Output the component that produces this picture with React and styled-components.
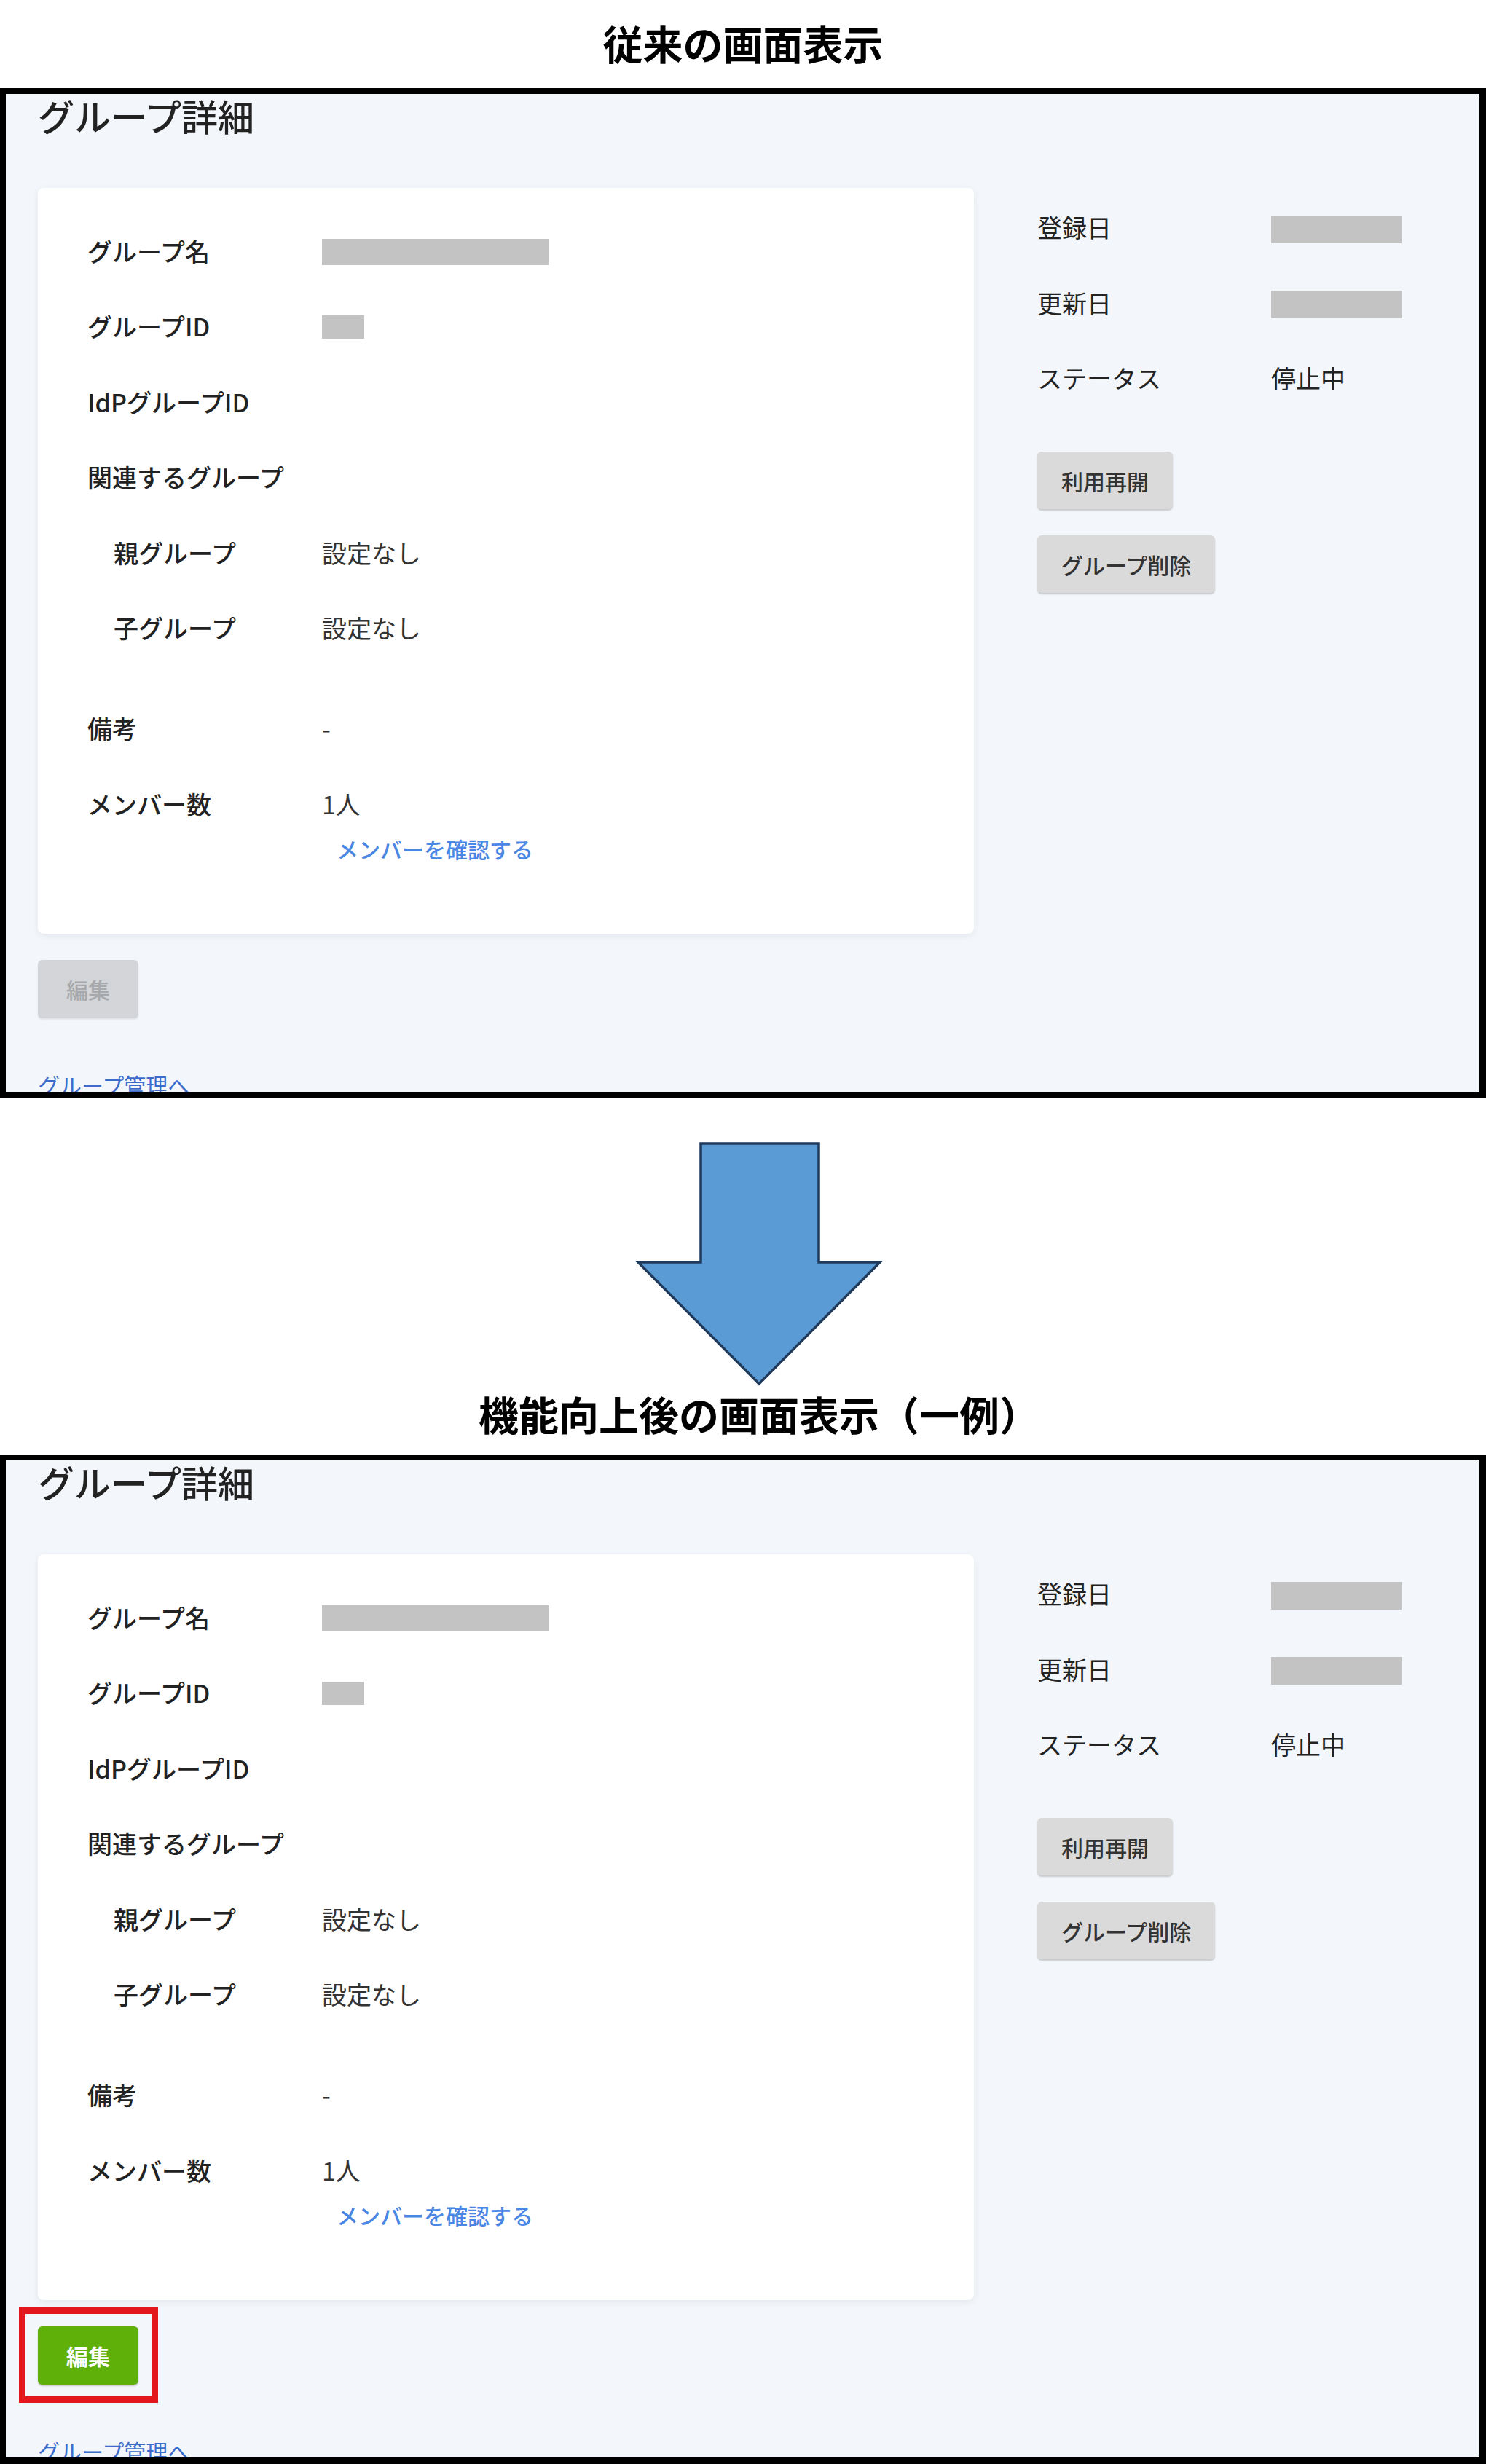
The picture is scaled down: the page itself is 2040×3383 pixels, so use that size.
import React from "react";
import styled, { createGlobalStyle } from "styled-components";

const GlobalStyle = createGlobalStyle`
  html, body {
    margin: 0;
    padding: 0;
    background: #ffffff;
  }
  body {
    font-family: "Noto Sans CJK JP", "Noto Sans", sans-serif;
    color: #222;
  }
`;

const Page = styled.div`
  width: 2040px;
`;

const Caption = styled.h2`
  margin: 0;
  height: ${(p) => p.$h}px;
  line-height: ${(p) => p.$lh}px;
  font-size: 55px;
  font-weight: 700;
  color: #000;
  text-align: center;
  padding-left: ${(p) => p.$shift || 0}px;
  box-sizing: border-box;
`;

const Frame = styled.section`
  box-sizing: border-box;
  height: ${(p) => p.$h}px;
  border: 9px solid #000;
  border-top-width: 8px;
  border-left-width: 8px;
  background: #f3f6fa;
  overflow: hidden;
  padding-left: 44px;
`;

const Heading = styled.h1`
  margin: 0 0 71px;
  font-size: 50px;
  line-height: 58px;
  font-weight: 500;
  color: #222;
`;

const Body = styled.div`
  display: flex;
  gap: 87px;
  align-items: flex-start;
`;

const Card = styled.div`
  box-sizing: border-box;
  width: 1285px;
  background: #fff;
  border-radius: 8px;
  box-shadow: 0 3px 10px rgba(40, 60, 90, 0.07);
  padding: 35px 0 65.5px 68px;
`;

const Row = styled.div`
  display: grid;
  grid-template-columns: 322px 1fr;
  padding: 27.75px 0;
  line-height: 48px;
  font-size: 34px;
  margin-top: ${(p) => p.$gap || 0}px;
`;

const Label = styled.div`
  font-weight: 500;
  color: #222;
  padding-left: ${(p) => (p.$sub ? 36 : 0)}px;
`;

const Value = styled.div`
  color: #333;
  display: flex;
  flex-direction: column;
  align-items: flex-start;
`;

const Masked = styled.span`
  display: block;
  width: ${(p) => p.$w}px;
  height: ${(p) => p.$h}px;
  background: #c3c3c3;
  margin-top: ${(p) => (48 - p.$h) / 2 + 1}px;
`;

const MemberLink = styled.a`
  margin-top: 13px;
  margin-left: 20px;
  font-size: 30px;
  font-weight: 500;
  color: #4a86e3;
  text-decoration: none;
`;

const Side = styled.div`
  margin-top: 2px;
  display: flex;
  flex-direction: column;
  align-items: flex-start;
`;

const SideRow = styled.div`
  display: grid;
  grid-template-columns: 321px 1fr;
  height: 103.5px;
  align-items: center;
  font-size: 34px;
  color: #222;
  width: 520px;
`;

const SideButtons = styled.div`
  margin-top: 49.5px;
  display: flex;
  flex-direction: column;
  align-items: flex-start;
  gap: 36px;
`;

const GrayButton = styled.button`
  height: 79px;
  padding: 0 33px;
  border: none;
  border-radius: 6px;
  background: #dadada;
  box-shadow: 0 2px 2px rgba(0, 0, 0, 0.18);
  font-family: inherit;
  font-size: 30px;
  font-weight: 500;
  color: #333;
`;

const EditWrap = styled.div`
  position: relative;
  display: inline-block;
  margin-top: 36px;
`;

const EditButton = styled.button`
  display: block;
  width: 138px;
  height: 80px;
  border: none;
  border-radius: 6px;
  font-family: inherit;
  font-size: 30px;
  font-weight: ${(p) => (p.$active ? 700 : 500)};
  background: ${(p) => (p.$active ? "#60b00a" : "#d3d5d8")};
  color: ${(p) => (p.$active ? "#fff" : "#a7a9ac")};
  box-shadow: 0 2px 2px rgba(0, 0, 0, ${(p) => (p.$active ? 0.2 : 0.08)});
`;

const Highlight = styled.span`
  position: absolute;
  top: -26px;
  left: -26px;
  right: -27px;
  bottom: -25px;
  border: 9px solid #e3161e;
  pointer-events: none;
`;

const BackLink = styled.a`
  display: block;
  margin-top: 71px;
  font-size: 30px;
  line-height: 40px;
  color: #3b6ccb;
  text-decoration: none;
`;

const ArrowSection = styled.div`
  padding: 60px 0 21px;
`;

const ArrowSvg = styled.svg`
  display: block;
  margin-left: 872px;
`;

function GroupDetail({ h, active }) {
  return (
    <Frame $h={h}>
      <Heading>グループ詳細</Heading>
      <Body>
        <Card>
          <Row>
            <Label>グループ名</Label>
            <Value>
              <Masked $w={312} $h={36} />
            </Value>
          </Row>
          <Row>
            <Label>グループID</Label>
            <Value>
              <Masked $w={58} $h={32} />
            </Value>
          </Row>
          <Row>
            <Label>IdPグループID</Label>
            <Value />
          </Row>
          <Row>
            <Label>関連するグループ</Label>
            <Value />
          </Row>
          <Row>
            <Label $sub>親グループ</Label>
            <Value>設定なし</Value>
          </Row>
          <Row>
            <Label $sub>子グループ</Label>
            <Value>設定なし</Value>
          </Row>
          <Row $gap={34.5}>
            <Label>備考</Label>
            <Value>-</Value>
          </Row>
          <Row>
            <Label>メンバー数</Label>
            <Value>
              1人
              <MemberLink href="#">メンバーを確認する</MemberLink>
            </Value>
          </Row>
        </Card>
        <Side>
          <SideRow>
            <span>登録日</span>
            <Masked $w={179} $h={38} />
          </SideRow>
          <SideRow>
            <span>更新日</span>
            <Masked $w={179} $h={38} />
          </SideRow>
          <SideRow>
            <span>ステータス</span>
            <span>停止中</span>
          </SideRow>
          <SideButtons>
            <GrayButton>利用再開</GrayButton>
            <GrayButton>グループ削除</GrayButton>
          </SideButtons>
        </Side>
      </Body>
      <EditWrap>
        <EditButton $active={active}>編集</EditButton>
        {active && <Highlight />}
      </EditWrap>
      <BackLink href="#">グループ管理へ</BackLink>
    </Frame>
  );
}

export default function App() {
  return (
    <Page>
      <GlobalStyle />
      <Caption $h={121} $lh={116}>従来の画面表示</Caption>
      <GroupDetail h={1387} />
      <ArrowSection>
        <ArrowSvg width="340" height="336" viewBox="0 0 340 336">
          <polygon
            points="90,2 252,2 252,165 336,165 170,332 4,165 90,165"
            fill="#5b9bd5"
            stroke="#1f3a5a"
            strokeWidth="3.5"
          />
        </ArrowSvg>
        <Caption $h={72} $lh={72} $shift={44}>
          機能向上後の画面表示（一例）
        </Caption>
      </ArrowSection>
      <GroupDetail h={1386} active />
    </Page>
  );
}
